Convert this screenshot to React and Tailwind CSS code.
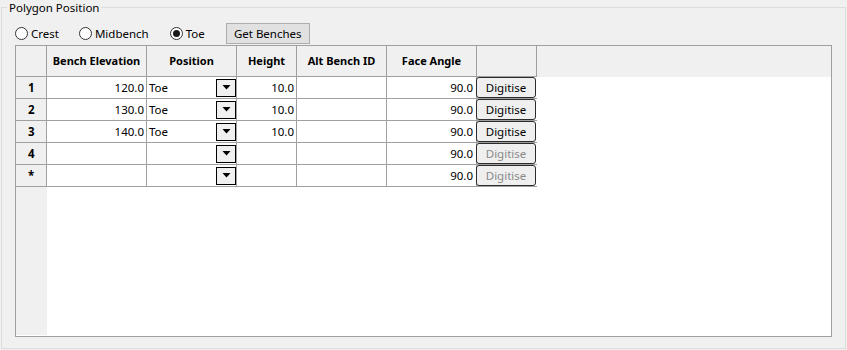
import React from "react";

const font = { fontFamily: '"Noto Sans", "Liberation Sans", sans-serif' };

function Radio({ label, checked }) {
  return (
    <div className="flex items-center h-[21px]">
      <div className="w-[13px] h-[13px] rounded-full border border-[#333333] bg-white flex items-center justify-center">
        {checked && <div className="w-[7px] h-[7px] rounded-full bg-[#1a1a1a]" />}
      </div>
      <span className="ml-[3px] text-[11.5px] text-black leading-none">{label}</span>
    </div>
  );
}

function Dropdown() {
  return (
    <div className="w-[20px] h-[18px] border border-black bg-[#f0f0f0] flex items-center justify-center">
      <svg width="9" height="5" viewBox="0 0 9 5">
        <polygon points="0.5,0 8.5,0 4.5,4.5" fill="#000" />
      </svg>
    </div>
  );
}

function DigitiseBtn({ disabled }) {
  return (
    <div
      className={
        "w-[60px] h-[21px] ml-[-1px] rounded-[3px] border border-[#2b2b2b] bg-[#efefef] flex items-center justify-center text-[11.5px] leading-none " +
        (disabled ? "text-[#8a8a8a]" : "text-black")
      }
    >
      Digitise
    </div>
  );
}

const rows = [
  { n: "1", be: "120.0", pos: "Toe", h: "10.0", fa: "90.0", dis: false },
  { n: "2", be: "130.0", pos: "Toe", h: "10.0", fa: "90.0", dis: false },
  { n: "3", be: "140.0", pos: "Toe", h: "10.0", fa: "90.0", dis: false },
  { n: "4", be: "", pos: "", h: "", fa: "90.0", dis: true },
  { n: "*", be: "", pos: "", h: "", fa: "90.0", dis: true },
];

const hdrCell = "h-full border-r border-[#a0a0a0] flex items-center justify-center text-[11px] font-bold text-black";
const cell = "h-full border-r border-[#a0a0a0] flex items-center text-[11.5px] text-black";

export default function App() {
  return (
    <div className="w-[847px] h-[350px] bg-[#f0f0f0] pt-[7px] pl-[1px]" style={font}>
      <div className="relative w-[845px] h-[342px] border border-[#dcdcdc] pl-[13px] pt-[15px]">
        <div className="absolute left-[5px] top-[-7px] bg-[#f0f0f0] px-[2px] text-[11.5px] text-black leading-[14px]">
          Polygon Position
        </div>
        {/* radio row */}
        <div className="flex items-center h-[21px]">
          <Radio label="Crest" checked={false} />
          <div className="w-[20px]" />
          <Radio label="Midbench" checked={false} />
          <div className="w-[21px]" />
          <Radio label="Toe" checked={true} />
          <div className="w-[21px]" />
          <div className="h-[21px] w-[84px] border border-[#adadad] bg-[#e1e1e1] flex items-center justify-center text-[11.5px] text-black leading-none">
            Get Benches
          </div>
        </div>
        {/* grid */}
        <div className="mt-[1px] w-[817px] h-[292px] border border-[#a0a0a0] bg-white flex flex-col">
          {/* header */}
          <div className="flex h-[31px] bg-[#f0f0f0] shrink-0">
            <div className="flex h-full border-b border-[#a0a0a0]">
              <div className={hdrCell + " w-[31px]"} />
              <div className={hdrCell + " w-[100px]"}>Bench Elevation</div>
              <div className={hdrCell + " w-[90px]"}>Position</div>
              <div className={hdrCell + " w-[60px]"}>Height</div>
              <div className={hdrCell + " w-[90px]"}>Alt Bench ID</div>
              <div className={hdrCell + " w-[90px]"}>Face Angle</div>
              <div className={hdrCell + " w-[60px]"} />
            </div>
            <div className="flex-1" />
          </div>
          {rows.map((r) => (
            <div key={r.n} className="flex h-[22px] shrink-0">
              <div className="flex h-full border-b border-[#a0a0a0]">
                <div className={cell + " w-[31px] bg-[#f0f0f0] font-bold pl-[12px]"}>{r.n}</div>
                <div className={cell + " w-[100px] justify-end pr-[2px]"}>{r.be}</div>
                <div className={cell + " w-[90px] justify-between pl-[2px] pr-[0px]"}>
                  <span>{r.pos}</span>
                  <Dropdown />
                </div>
                <div className={cell + " w-[60px] justify-end pr-[2px]"}>{r.h}</div>
                <div className={cell + " w-[90px]"} />
                <div className={cell + " w-[90px] justify-end pr-[3px]"}>{r.fa}</div>
                <div className="h-full w-[60px] flex items-start">
                  <DigitiseBtn disabled={r.dis} />
                </div>
              </div>
            </div>
          ))}
          <div className="flex-1 flex pb-[1px]">
            <div className="w-[31px] bg-[#f0f0f0]" />
          </div>
        </div>
      </div>
    </div>
  );
}
